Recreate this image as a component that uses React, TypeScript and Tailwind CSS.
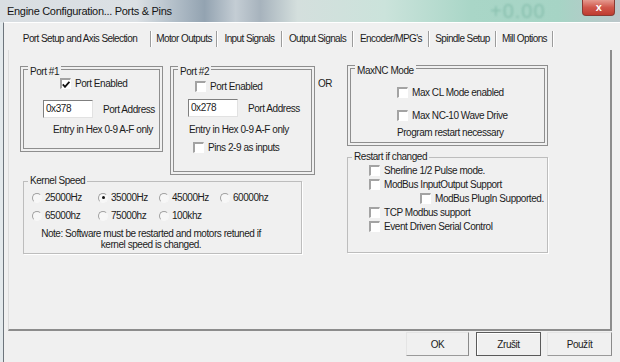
import React from 'react';

// Mach3 "Engine Configuration... Ports & Pins" dialog, classic WinForms look

function Check({ checked = false }: { checked?: boolean }) {
  return (
    <span className="flex h-[11px] w-[11px] shrink-0 items-center justify-center border-t-2 border-l-2 border-r border-b border-t-[#a3a3a3] border-l-[#a3a3a3] border-r-white border-b-white bg-white">
      {checked && (
        <svg width="8" height="7" viewBox="0 0 8 7">
          <path d="M0.8 3.4 L3 5.8 L7.4 0.8" fill="none" stroke="#111" strokeWidth="1.8" />
        </svg>
      )}
    </span>
  );
}

function CheckRow({ label, checked, className = '' }: { label: string; checked?: boolean; className?: string }) {
  return (
    <div className={`flex h-[11px] items-center gap-[4px] ${className}`}>
      <Check checked={checked} />
      <span className="whitespace-nowrap leading-[11px]">{label}</span>
    </div>
  );
}

function Radio({ label, on = false }: { label: string; on?: boolean }) {
  return (
    <div className="flex h-[11px] items-center gap-[3px]">
      <span className="flex h-[10px] w-[10px] shrink-0 items-center justify-center rounded-full border-[1.5px] border-t-[#a0a0a0] border-l-[#a0a0a0] border-r-[#f7f7f7] border-b-[#f7f7f7] bg-[#f7f7f7]">
        {on && <span className="h-[3px] w-[3px] rounded-full bg-[#111]" />}
      </span>
      <span className="whitespace-nowrap leading-[11px]">{label}</span>
    </div>
  );
}

function HexInput({ value }: { value: string }) {
  return (
    <div className="flex h-[18px] w-[50px] items-center border border-t-[#7f7f7f] border-l-[#7f7f7f] border-r-[#e2e2e2] border-b-[#e2e2e2] bg-white pl-[2px] leading-[12px]">
      {value}
    </div>
  );
}

function Legend({ text, single = false }: { text: string; single?: boolean }) {
  return (
    <div
      className={`ml-[4px] w-fit bg-[#f0f0f0] px-[2px] leading-[12px] whitespace-nowrap ${
        single ? '-mt-[7px]' : '-mt-[4px]'
      }`}
    >
      {text}
    </div>
  );
}

const tabs = [
  { label: 'Motor Outputs', w: 'w-[64px]' },
  { label: 'Input Signals', w: 'w-[63px]' },
  { label: 'Output Signals', w: 'w-[69px]' },
  { label: "Encoder/MPG's", w: 'w-[74px]' },
  { label: 'Spindle Setup', w: 'w-[65px]' },
  { label: 'Mill Options', w: 'w-[55px]' },
];

function Sep() {
  return <span className="h-[16px] w-[2px] shrink-0 border-l border-r border-l-[#9c9c9c] border-r-white" />;
}

export default function App() {
  return (
    <div className="flex h-[362px] w-[620px] flex-col overflow-hidden font-['Liberation_Sans',Arial,sans-serif] text-[10px] tracking-[-0.45px] text-[#1c1c1c]">
      {/* title bar */}
      <div className="relative flex h-[22px] shrink-0 items-start overflow-hidden bg-[linear-gradient(90deg,#d9dee2_0%,#dbe0e4_22%,#b3bfc9_28%,#93a3b1_33%,#c4cdd4_38%,#a7b3bd_42%,#d4dfdd_48%,#cbe3db_62%,#a9d6c7_76%,#a6d4c5_90%,#bcc6ca_100%)]">
        <span className="pt-[5px] pl-[7px] text-[11px] leading-[12px] tracking-[-0.3px] text-[#151515]">
          Engine Configuration... Ports &amp; Pins
        </span>
        <span className="absolute top-[1px] left-[490px] text-[20px] leading-[20px] tracking-[1px] text-[#74b29f] opacity-60 blur-[1px]">
          +0.00
        </span>
        <span className="relative mr-[5px] ml-auto flex h-[16px] w-[33px] items-center justify-center rounded-b-[4px] border border-t-0 border-[#8a3a33] bg-[linear-gradient(180deg,#e59a8f_0%,#d0574b_50%,#bf3b30_100%)] text-[11px] leading-none font-bold text-white">
          x
        </span>
      </div>

      {/* window body */}
      <div className="flex flex-1 bg-[#e3e9ec] pl-[3px]">
        <div className="flex flex-1 flex-col border-t border-l border-t-white border-l-[#6d757c] bg-[#f0f0f0]">
          {/* tab strip */}
          <div className="ml-[6px] flex h-[27px] shrink-0 items-center pt-[4px] tracking-[-0.6px]">
            <span className="w-[140px] text-center leading-[12px] whitespace-nowrap">Port Setup and Axis Selection</span>
            <Sep />
            {tabs.map((t) => (
              <React.Fragment key={t.label}>
                <span className={`${t.w} text-center leading-[12px] whitespace-nowrap`}>{t.label}</span>
                <Sep />
              </React.Fragment>
            ))}
          </div>

          {/* tab page */}
          <div className="ml-[4px] flex h-[281px] w-[604px] shrink-0 border-r-2 border-b-2 border-l border-r-[#8c8c8c] border-b-[#8c8c8c] border-l-[#dcdcdc] pt-[15px] pl-[11px]">
            {/* left column */}
            <div className="flex w-[327px] shrink-0 flex-col">
              <div className="mt-[1px] flex items-start">
                {/* Port #1 */}
                <div className="h-[86px] w-[143px] shrink-0 border-4 border-double border-[#8e8e8e]">
                  <Legend text="Port #1" />
                  <CheckRow label="Port Enabled" checked className="ml-[36px]" />
                  <div className="mt-[11px] ml-[19px] flex items-center gap-[10px]">
                    <HexInput value="0x378" />
                    <span className="whitespace-nowrap">Port Address</span>
                  </div>
                  <div className="mt-[6px] ml-[29px] leading-[12px] whitespace-nowrap">Entry in Hex 0-9 A-F only</div>
                </div>

                {/* Port #2 */}
                <div className="ml-[7px] h-[109px] w-[145px] shrink-0 border-4 border-double border-[#8e8e8e]">
                  <Legend text="Port #2" />
                  <CheckRow label="Port Enabled" className="mt-[3px] ml-[21px]" />
                  <div className="mt-[7px] ml-[14px] flex items-center gap-[10px]">
                    <HexInput value="0x278" />
                    <span className="whitespace-nowrap">Port Address</span>
                  </div>
                  <div className="mt-[7px] ml-[15px] leading-[12px] whitespace-nowrap">Entry in Hex 0-9 A-F only</div>
                  <CheckRow label="Pins 2-9 as inputs" className="mt-[6px] ml-[19px]" />
                </div>

                <span className="mt-[12px] ml-[3px] leading-[12px]">OR</span>
              </div>

              {/* Kernel Speed */}
              <div className="mt-[6px] ml-[3px] h-[73px] w-[279px] border border-[#bdbdbd] shadow-[1px_1px_0_#ffffff]">
                <Legend text="Kernel Speed" single />
                <div className="mt-[5px] ml-[8px] grid grid-cols-[66px_61px_61px_auto] gap-y-[7px]">
                  <Radio label="25000Hz" />
                  <Radio label="35000Hz" on />
                  <Radio label="45000Hz" />
                  <Radio label="60000hz" />
                  <Radio label="65000hz" />
                  <Radio label="75000hz" />
                  <Radio label="100khz" />
                </div>
                <div className="mt-[7px] ml-[12px] w-[230px] text-center leading-[11px]">
                  Note: Software must be restarted and motors retuned if
                  <br />
                  kernel speed is changed.
                </div>
              </div>
            </div>

            {/* right column */}
            <div className="flex flex-col">
              <div className="h-[81px] w-[201px] border-4 border-double border-[#8e8e8e]">
                <Legend text="MaxNC Mode" />
                <CheckRow label="Max CL Mode enabled" className="mt-[10px] ml-[46px]" />
                <CheckRow label="Max NC-10 Wave Drive" className="mt-[12px] ml-[46px]" />
                <div className="mt-[6px] ml-[46px] leading-[12px] whitespace-nowrap">Program restart necessary</div>
              </div>

              <div className="mt-[11px] h-[96px] w-[201px] border border-[#bdbdbd] shadow-[1px_1px_0_#ffffff]">
                <Legend text="Restart if changed" single />
                <CheckRow label="Sherline 1/2 Pulse mode." className="mt-[2px] ml-[21px]" />
                <CheckRow label="ModBus InputOutput Support" className="mt-[3px] ml-[21px]" />
                <CheckRow label="ModBus PlugIn Supported." className="mt-[3px] ml-[72px]" />
                <CheckRow label="TCP Modbus support" className="mt-[3px] ml-[21px]" />
                <CheckRow label="Event Driven Serial Control" className="mt-[3px] ml-[21px]" />
              </div>
            </div>
          </div>

          {/* dialog buttons */}
          <div className="mt-[1px] flex justify-end gap-[7px] pr-[8px]">
            <button className="h-[24px] w-[63px] border border-t-[#e4e4e4] border-r-[#8a8a8a] border-b-[#9a9a9a] border-l-[#e4e4e4] bg-[#f0f0f0] pt-[2px] text-[10px] leading-[12px]">
              OK
            </button>
            <button className="h-[24px] w-[65px] border border-[#5a5a5a] bg-[#f0f0f0] pt-[2px] text-[10px] leading-[12px] shadow-[inset_1px_1px_0_#ffffff]">
              Zrušit
            </button>
            <button className="-ml-[1px] h-[24px] w-[65px] border border-t-[#e4e4e4] border-r-[#8a8a8a] border-b-[#9a9a9a] border-l-[#e4e4e4] bg-[#f0f0f0] pt-[2px] text-[10px] leading-[12px]">
              Použít
            </button>
          </div>
        </div>
      </div>
    </div>
  );
}
